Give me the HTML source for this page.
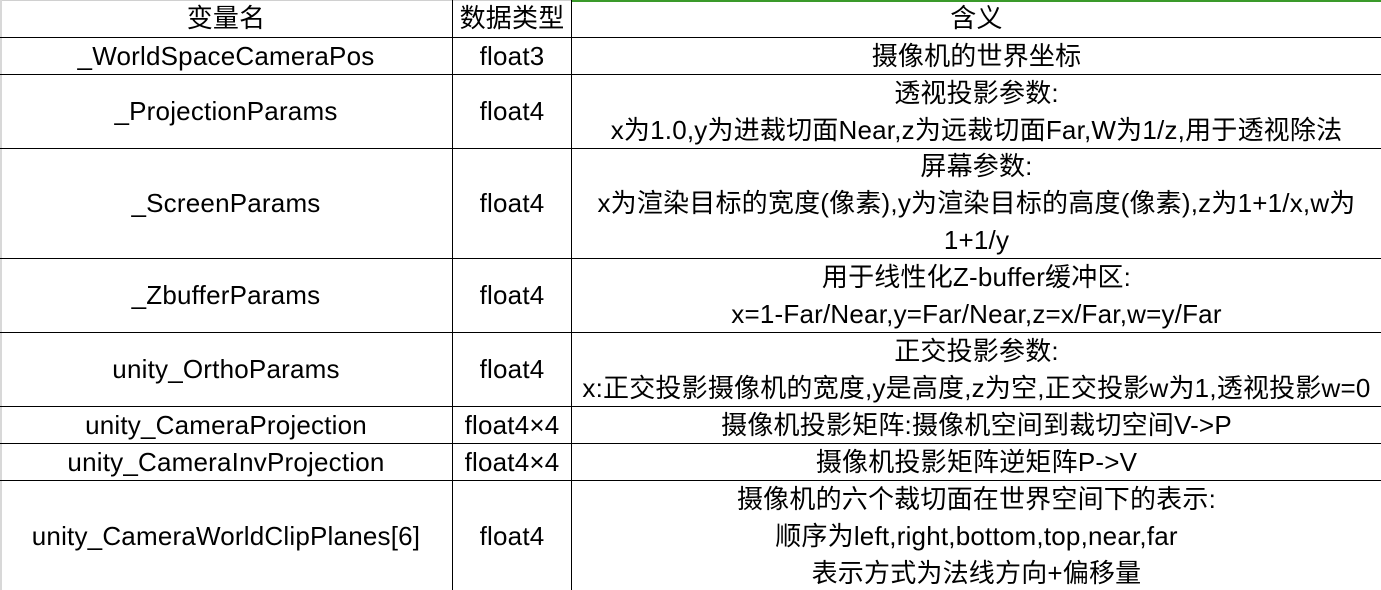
<!DOCTYPE html>
<html><head><meta charset="utf-8"><style>
html,body{margin:0;padding:0;background:#fff;width:1381px;height:590px;overflow:hidden}
body{position:relative;font-family:"Liberation Sans","Noto Sans CJK SC",sans-serif;font-size:26px;color:#000}
.h{position:absolute;left:0;width:1381px;height:1px;background:#000}
.v{position:absolute;top:0;height:590px;width:1px;background:#000}
.c{position:absolute;display:flex;flex-direction:column;justify-content:center;align-items:center;text-align:center;line-height:37px;white-space:nowrap;letter-spacing:0.2px}
</style></head><body>
<div style="position:absolute;left:0;top:0;width:572px;height:1px;background:#d0d0d0"></div>
<div style="position:absolute;left:572px;top:0;width:809px;height:2px;background:#3a9a2a"></div>
<div style="position:absolute;left:0;top:0;width:2px;height:590px;background:#d8d8d8"></div>
<div class="h" style="top:37px"></div>
<div class="h" style="top:74px"></div>
<div class="h" style="top:148px"></div>
<div class="h" style="top:258px"></div>
<div class="h" style="top:332px"></div>
<div class="h" style="top:406px"></div>
<div class="h" style="top:443px"></div>
<div class="h" style="top:480px"></div>
<div class="v" style="left:452px"></div>
<div class="v" style="left:571px"></div>

<div class="c" style="left:0;width:452px;top:0;height:37px">变量名</div>
<div class="c" style="left:453px;width:118px;top:0;height:37px">数据类型</div>
<div class="c" style="left:572px;width:809px;top:0;height:37px">含义</div>

<div class="c" style="left:0;width:452px;top:38px;height:36px">_WorldSpaceCameraPos</div>
<div class="c" style="left:453px;width:118px;top:38px;height:36px">float3</div>
<div class="c" style="left:572px;width:809px;top:38px;height:36px">摄像机的世界坐标</div>

<div class="c" style="left:0;width:452px;top:75px;height:73px">_ProjectionParams</div>
<div class="c" style="left:453px;width:118px;top:75px;height:73px">float4</div>
<div class="c" style="left:572px;width:809px;top:75px;height:73px"><div>透视投影参数:</div><div>x为1.0,y为进裁切面Near,z为远裁切面Far,W为1/z,用于透视除法</div></div>

<div class="c" style="left:0;width:452px;top:149px;height:109px">_ScreenParams</div>
<div class="c" style="left:453px;width:118px;top:149px;height:109px">float4</div>
<div class="c" style="left:572px;width:809px;top:149px;height:109px"><div>屏幕参数:</div><div>x为渲染目标的宽度(像素),y为渲染目标的高度(像素),z为1+1/x,w为</div><div>1+1/y</div></div>

<div class="c" style="left:0;width:452px;top:259px;height:73px">_ZbufferParams</div>
<div class="c" style="left:453px;width:118px;top:259px;height:73px">float4</div>
<div class="c" style="left:572px;width:809px;top:259px;height:73px"><div>用于线性化Z-buffer缓冲区:</div><div>x=1-Far/Near,y=Far/Near,z=x/Far,w=y/Far</div></div>

<div class="c" style="left:0;width:452px;top:333px;height:73px">unity_OrthoParams</div>
<div class="c" style="left:453px;width:118px;top:333px;height:73px">float4</div>
<div class="c" style="left:572px;width:809px;top:333px;height:73px"><div>正交投影参数:</div><div>x:正交投影摄像机的宽度,y是高度,z为空,正交投影w为1,透视投影w=0</div></div>

<div class="c" style="left:0;width:452px;top:407px;height:36px">unity_CameraProjection</div>
<div class="c" style="left:453px;width:118px;top:407px;height:36px">float4×4</div>
<div class="c" style="left:572px;width:809px;top:407px;height:36px">摄像机投影矩阵:摄像机空间到裁切空间V-&gt;P</div>

<div class="c" style="left:0;width:452px;top:444px;height:36px">unity_CameraInvProjection</div>
<div class="c" style="left:453px;width:118px;top:444px;height:36px">float4×4</div>
<div class="c" style="left:572px;width:809px;top:444px;height:36px">摄像机投影矩阵逆矩阵P-&gt;V</div>

<div class="c" style="left:0;width:452px;top:481px;height:110px">unity_CameraWorldClipPlanes[6]</div>
<div class="c" style="left:453px;width:118px;top:481px;height:110px">float4</div>
<div class="c" style="left:572px;width:809px;top:481px;height:110px"><div>摄像机的六个裁切面在世界空间下的表示:</div><div>顺序为left,right,bottom,top,near,far</div><div>表示方式为法线方向+偏移量</div></div>
</body></html>
